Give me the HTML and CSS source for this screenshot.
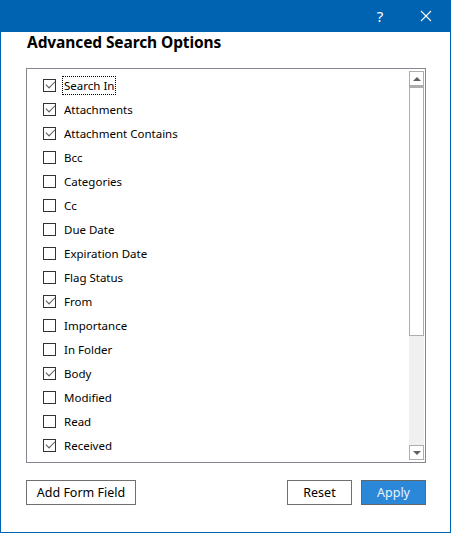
FILE: index.html
```html
<!DOCTYPE html>
<html>
<head>
<meta charset="utf-8">
<link rel="stylesheet" href="styles.css">
</head>
<body>
<div class="window">
  <div class="titlebar">
    <div class="tb-btn help">?</div>
    <div class="tb-btn close">
      <svg width="12" height="12" viewBox="0 0 12 12"><path d="M1 1 L11 11 M11 1 L1 11" stroke="#fff" stroke-width="1.1" fill="none"/></svg>
    </div>
  </div>
  <div class="content">
    <h1 class="heading">Advanced Search Options</h1>
    <div class="listbox">
      <ul class="items">
        <li class="item on"><span class="cb"></span><span class="label focus">Search In</span></li>
        <li class="item on"><span class="cb"></span><span class="label">Attachments</span></li>
        <li class="item on"><span class="cb"></span><span class="label">Attachment Contains</span></li>
        <li class="item"><span class="cb"></span><span class="label">Bcc</span></li>
        <li class="item"><span class="cb"></span><span class="label">Categories</span></li>
        <li class="item"><span class="cb"></span><span class="label">Cc</span></li>
        <li class="item"><span class="cb"></span><span class="label">Due Date</span></li>
        <li class="item"><span class="cb"></span><span class="label">Expiration Date</span></li>
        <li class="item"><span class="cb"></span><span class="label">Flag Status</span></li>
        <li class="item on"><span class="cb"></span><span class="label">From</span></li>
        <li class="item"><span class="cb"></span><span class="label">Importance</span></li>
        <li class="item"><span class="cb"></span><span class="label">In Folder</span></li>
        <li class="item on"><span class="cb"></span><span class="label">Body</span></li>
        <li class="item"><span class="cb"></span><span class="label">Modified</span></li>
        <li class="item"><span class="cb"></span><span class="label">Read</span></li>
        <li class="item on"><span class="cb"></span><span class="label">Received</span></li>
      </ul>
      <div class="scrollbar">
        <div class="sb-btn"><span class="arrow up"></span></div>
        <div class="sb-track"><div class="sb-thumb"></div></div>
        <div class="sb-btn"><span class="arrow down"></span></div>
      </div>
    </div>
    <div class="buttons">
      <button class="btn wide">Add Form Field</button>
      <div class="spacer"></div>
      <button class="btn">Reset</button>
      <button class="btn primary">Apply</button>
    </div>
  </div>
</div>
</body>
</html>
```
FILE: styles.css
```css
html, body {
  margin: 0;
  padding: 0;
  background: #fff;
}
body {
  font-family: "Noto Sans", "Open Sans", sans-serif;
  font-size: 11.5px;
  color: #000;
}
.window {
  box-sizing: border-box;
  width: 451px;
  height: 533px;
  border: 1px solid #0063b1;
  border-top: none;
  display: flex;
  flex-direction: column;
}
.titlebar {
  height: 32px;
  background: #0063b1;
  display: flex;
  justify-content: flex-end;
  align-items: center;
  margin: 0 -1px;
}
.tb-btn {
  color: #fff;
  display: flex;
  align-items: center;
  justify-content: center;
  height: 32px;
}
.help {
  width: 46px;
  font-size: 15px;
  font-family: "Noto Sans", sans-serif;
  font-weight: normal;
}
.close {
  width: 46px;
  margin-right: 2px;
}
.content {
  padding: 0 24px 0 25px;
  display: flex;
  flex-direction: column;
}
.heading {
  margin: 0;
  padding-top: 0;
  height: 36px;
  font-size: 15.5px;
  font-weight: bold;
  line-height: 20px;
  letter-spacing: -0.1px;
  padding-left: 1px;
}
.listbox {
  box-sizing: border-box;
  height: 395px;
  border: 1px solid #828790;
  display: grid;
  grid-template-columns: 1fr 15px;
  padding: 2px 1px 2px 0;
}
.items {
  list-style: none;
  margin: 0;
  padding: 2px 0 0 16px;
}
.item {
  height: 24px;
  display: flex;
  align-items: center;
}
.cb {
  box-sizing: border-box;
  width: 13px;
  height: 13px;
  border: 1px solid #333;
  background: #fff;
  margin-right: 8px;
  position: relative;
}
.item.on .cb::after {
  content: "";
  position: absolute;
  left: 3.5px;
  top: -0.5px;
  width: 4px;
  height: 8px;
  border-right: 1px solid #555;
  border-bottom: 1px solid #555;
  transform: rotate(45deg);
}
.label {
  line-height: 17px;
  padding: 0 1px;
  border: 1px dotted transparent;
  margin-left: -2px;
}
.label.focus {
  border-color: #000;
}
.scrollbar {
  display: flex;
  flex-direction: column;
  background: #f0f0f0;
}
.sb-btn {
  box-sizing: border-box;
  height: 15px;
  border: 1px solid #adadad;
  background: #fff;
  display: flex;
  align-items: center;
  justify-content: center;
}
.sb-track {
  flex: 1;
  display: flex;
  flex-direction: column;
}
.sb-thumb {
  box-sizing: border-box;
  height: 250px;
  border: 1px solid #adadad;
  border-top-width: 2px;
  background: #fff;
}
.arrow {
  width: 0;
  height: 0;
  border-left: 4px solid transparent;
  border-right: 4px solid transparent;
}
.arrow.up {
  border-bottom: 4px solid #606060;
}
.arrow.down {
  border-top: 4px solid #606060;
}
.buttons {
  display: flex;
  margin-top: 17px;
  gap: 9px;
}
.spacer {
  flex: 1;
}
.btn {
  box-sizing: border-box;
  height: 25px;
  width: 65px;
  border: 1px solid #707070;
  background: #fff;
  font-family: "Noto Sans", "Open Sans", sans-serif;
  font-size: 12.5px;
  color: #000;
  padding: 0;
}
.btn.wide {
  width: 110px;
}
.btn.primary {
  background: #2b88d8;
  color: #eaf4ff;
  border-color: #666;
}
```
